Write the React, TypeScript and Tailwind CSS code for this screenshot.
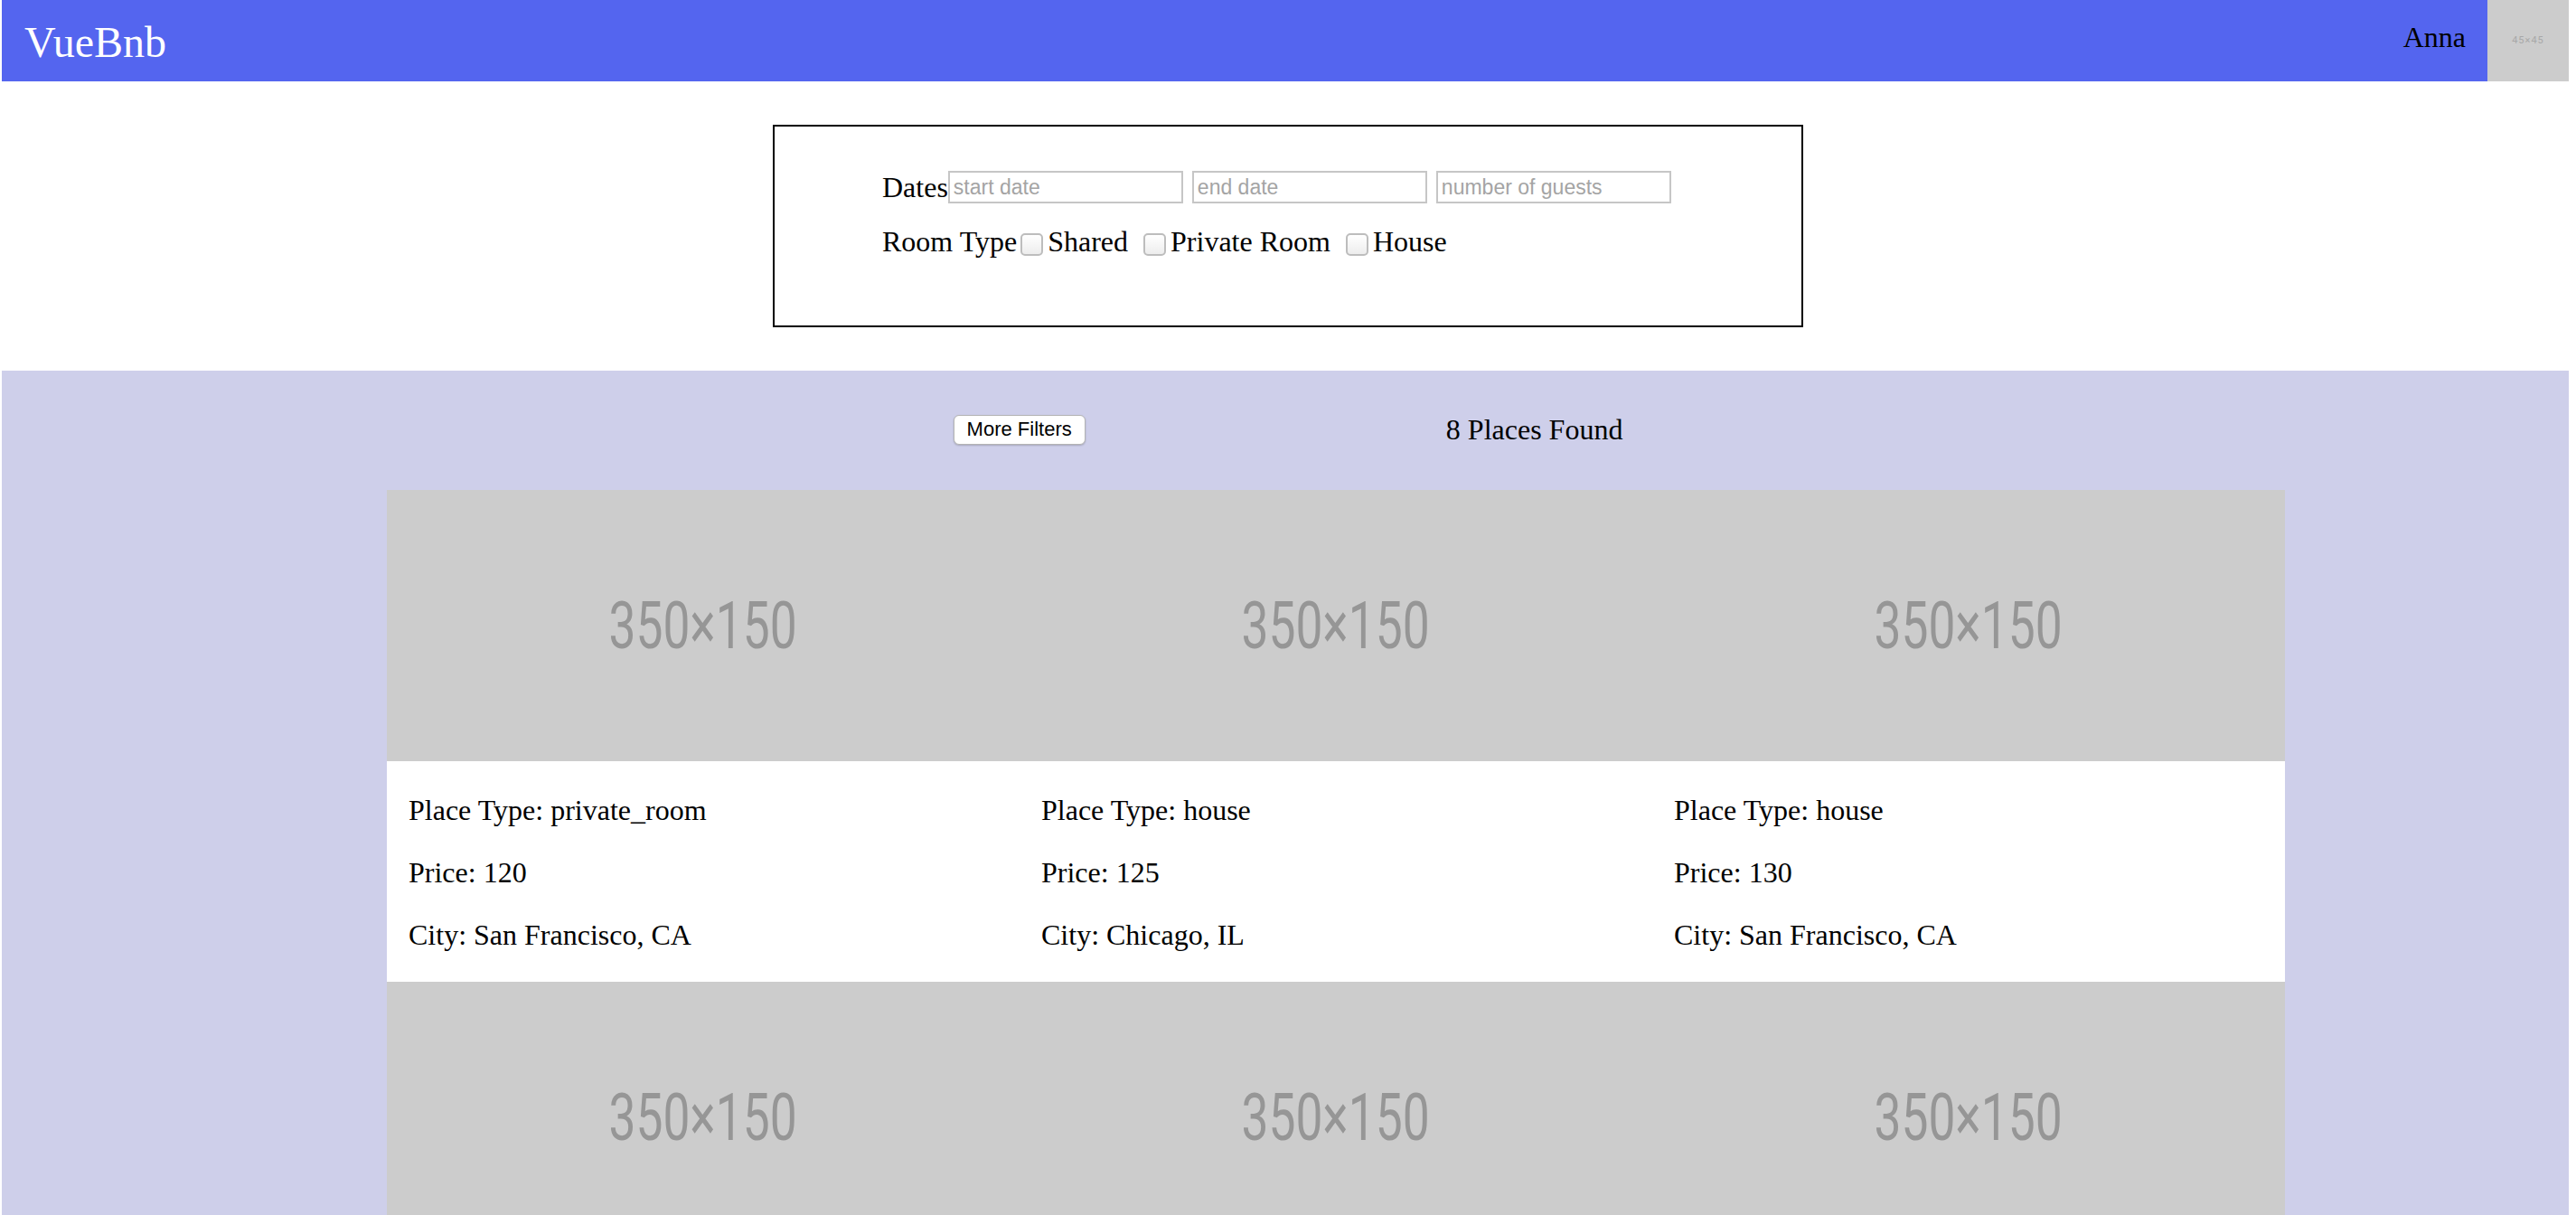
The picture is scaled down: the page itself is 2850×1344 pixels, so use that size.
import React from 'react';

// 숙소 카드 데이터 타입
interface Place {
  id: number;
  type: string;
  price: number;
  city: string;
}

const places: Place[] = [
  { id: 1, type: 'private_room', price: 120, city: 'San Francisco, CA' },
  { id: 2, type: 'house', price: 125, city: 'Chicago, IL' },
  { id: 3, type: 'house', price: 130, city: 'San Francisco, CA' },
  { id: 4, type: 'shared', price: 80, city: 'New York, NY' },
  { id: 5, type: 'private_room', price: 95, city: 'Chicago, IL' },
  { id: 6, type: 'house', price: 150, city: 'Seattle, WA' },
  { id: 7, type: 'shared', price: 60, city: 'Austin, TX' },
  { id: 8, type: 'private_room', price: 110, city: 'Boston, MA' },
];

const roomTypes = ['Shared', 'Private Room', 'House'];

const serif = "font-['Liberation_Serif','Times_New_Roman',serif]";

export default function App() {
  return (
    <div className={`h-screen overflow-hidden bg-white text-black ${serif}`}>
      {/* 헤더 */}
      <header className="ml-[2px] mr-[8px] h-[90px] bg-[#5465ef] flex items-center justify-between">
        <div className="pl-[25px] mt-[3px] text-[48px] leading-none text-white">VueBnb</div>
        <div className="flex items-center h-full">
          <span className="text-[32px] leading-[37px] mb-[8px]">Anna</span>
          <div className="ml-[24px] w-[90px] h-[90px] bg-[#cccccc] flex items-center justify-center">
            <span className="font-['Roboto',sans-serif] text-[11px] tracking-[1px] text-[#a8a8a8]">45×45</span>
          </div>
        </div>
      </header>

      {/* 검색 필터 */}
      <div className="mx-auto mt-[48px] w-[1140px] h-[224px] border-2 border-black pl-[119px] pt-[49px]">
        <div className="flex items-center h-[36px]">
          <span className="text-[32px] leading-[37px]">Dates</span>
          {['start date', 'end date', 'number of guests'].map((ph, i) => (
            <input
              key={ph}
              placeholder={ph}
              className={`${i === 0 ? '' : 'ml-[10px]'} w-[260px] h-[36px] border-2 border-[#c6c6c6] bg-white px-[4px] text-[23px] font-['Liberation_Sans',Arial,sans-serif] placeholder:text-[#a4a4a4] outline-none`}
            />
          ))}
        </div>
        <div className="flex items-center h-[37px] mt-[24px]">
          <span className="text-[32px] leading-[37px]">Room Type</span>
          {roomTypes.map((rt, i) => (
            <label key={rt} className="flex items-center">
              <input
                type="checkbox"
                className={`${i === 0 ? 'ml-[4px]' : 'ml-[17px]'} mr-[5px] mt-[5px] appearance-none w-[25px] h-[25px] rounded-[5px] border-2 border-[#bdbdbd] bg-linear-to-b from-white to-[#ededed]`}
              />
              <span className="text-[32px] leading-[37px]">{rt}</span>
            </label>
          ))}
        </div>
      </div>

      {/* 검색 결과 */}
      <section className="ml-[2px] mr-[8px] mt-[48px] bg-[#cecfea] pt-[48px] pb-[40px]">
        <div className="ml-[853px] w-[1140px] h-[34px] flex items-center justify-around">
          <button className="h-[33px] px-[14px] bg-white border border-[#b4b4b4] rounded-[6px] shadow-[0_1px_2px_rgba(0,0,0,0.2)] text-[22px] leading-none font-['Liberation_Sans',Arial,sans-serif]">
            More Filters
          </button>
          <span className="text-[32px] leading-[37px]">{places.length} Places Found</span>
        </div>

        <div className="mt-[50px] ml-[426px] w-[2100px] grid grid-cols-3">
          {places.map((p) => (
            <div key={p.id}>
              <div className="h-[300px] bg-[#cccccc] flex items-center justify-center overflow-hidden">
                <span className="font-['Roboto',sans-serif] text-[73px] leading-none text-[#969696] scale-x-[0.73]">350×150</span>
              </div>
              <div className="bg-white px-[24px] pt-[4px] pb-[1px]">
                <p className="my-[32px] text-[32px] leading-[37px]">Place Type: {p.type}</p>
                <p className="my-[32px] text-[32px] leading-[37px]">Price: {p.price}</p>
                <p className="my-[32px] text-[32px] leading-[37px]">City: {p.city}</p>
              </div>
            </div>
          ))}
        </div>
      </section>
    </div>
  );
}
